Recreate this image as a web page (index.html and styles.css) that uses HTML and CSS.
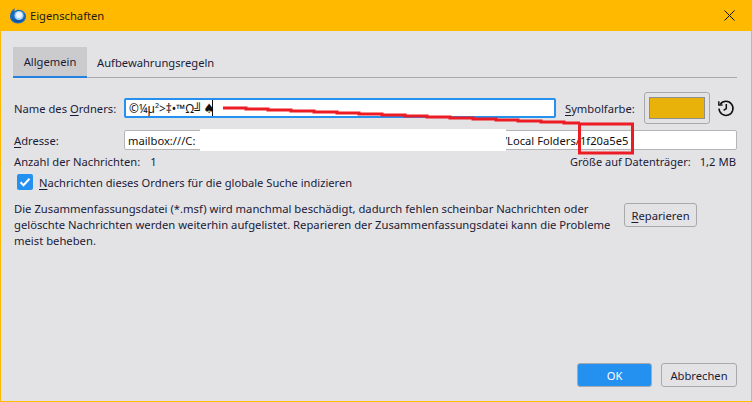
FILE: index.html
```html
<!DOCTYPE html>
<html lang="de">
<head>
<meta charset="utf-8">
<title>Eigenschaften</title>
<link rel="stylesheet" href="styles.css">
</head>
<body>
<div class="window">
  <header class="titlebar">
    <svg class="app-icon" width="18" height="18" viewBox="0 0 18 18">
      <path d="M1 9.500C1 5.500 3 2.500 6 1.200 5.400 2.400 5.300 3.500 5.500 4.300 6.500 3.400 8 2.800 9.500 2.800 13.500 2.800 17 5.800 17 9.500 17 13.500 13.500 16.500 9 16.500 4.500 16.500 1 13.500 1 9.500z" fill="#1a6ac2"/>
      <path d="M3 11C4 14 7 15.500 10 15 13 14.500 15.500 12.500 16 9.500 15.500 12 13 13.500 10 13.500 7 13.500 4.500 12.500 3 11z" fill="#0d4a96"/>
      <circle cx="10" cy="8.500" r="4.600" fill="#a9d2f1"/>
      <circle cx="10" cy="7.900" r="3" fill="#e9f4fc"/>
    </svg>
    <span class="title">Eigenschaften</span>
    <svg class="close" width="11" height="11" viewBox="0 0 11 11"><path d="M.5.500l10 10M10.500.500l-10 10" stroke="#111" stroke-width="1" fill="none"/></svg>
  </header>
  <main class="content">
    <nav class="tabs">
      <div class="tab active">Allgemein</div>
      <div class="tab">Aufbewahrungsregeln</div>
    </nav>
    <div class="row row-name">
      <label class="label"><span>Name des <u>O</u>rdners:</span></label>
      <div class="input focused"><span class="name-text">©¼µ²&gt;‡•™Ω╝ <span class="spade">♠</span></span><i class="caret"></i></div>
      <label class="color-label"><u>S</u>ymbolfarbe:</label>
      <div class="swatch"><div class="swatch-fill"></div></div>
      <svg class="history" width="18" height="18" viewBox="0 0 18 18" fill="none" stroke="#111" stroke-width="1.500">
        <path d="M3.300 5.300A7 7 0 1 1 2 9.500"/>
        <path d="M1.800 2.300v3.700h3.700" stroke-width="1.400"/>
        <path d="M9.300 5v4.500l-2.700 1.800"/>
      </svg>
    </div>
    <div class="row row-address">
      <label class="label"><u>A</u>dresse:</label>
      <div class="input address"><span>mailbox:///C:</span><span class="tail">/Local Folders/1f20a5e5</span></div>
    </div>
    <div class="row row-stats">
      <div class="stat-count">Anzahl der Nachrichten:<span class="count">1</span></div>
      <div class="stat-size">Größe auf Datenträger:<span class="size">1,2 MB</span></div>
    </div>
    <div class="check-row">
      <svg class="checkbox" width="16" height="16" viewBox="0 0 16 16">
        <rect width="16" height="16" rx="2" fill="#2490ef"/>
        <path d="M3.500 8.200l3 3 6-6.500" stroke="#fff" stroke-width="2" fill="none"/>
      </svg>
      <span><u>N</u>achrichten dieses Ordners für die globale Suche indizieren</span>
    </div>
    <div class="repair">
      <p>Die Zusammenfassungsdatei (*.msf) wird manchmal beschädigt, dadurch fehlen scheinbar Nachrichten oder gelöschte Nachrichten werden weiterhin aufgelistet. Reparieren der Zusammenfassungsdatei kann die Probleme meist beheben.</p>
      <div class="button"><span><u>R</u>eparieren</span></div>
    </div>
    <footer class="actions">
      <div class="button primary">OK</div>
      <div class="button">Abbrechen</div>
    </footer>
  </main>
  <div class="redaction"></div>
  <svg class="annotation" width="752" height="402" viewBox="0 0 752 402" fill="none" stroke="#ed1c24" stroke-width="3">
    <path d="M223 108H246V109H268V110H291V111H314V112H337V113H359V114H382V115H405V116H427V117H450V118H473V119H496V120H518V121H541V122H564V123H580"/>
    <rect x="579.500" y="124" width="53" height="29"/>
  </svg>
</div>
</body>
</html>
```
FILE: styles.css
```css
* { box-sizing: border-box; }
html, body { margin: 0; padding: 0; }
body {
  width: 752px;
  height: 402px;
  overflow: hidden;
  font-family: "Noto Sans", "Open Sans", sans-serif;
  font-size: 11.200px;
  color: #1c1b36;
}
u { text-underline-offset: 2px; }
.window {
  position: relative;
  width: 752px;
  height: 402px;
  display: flex;
  flex-direction: column;
  background: #e3e3e6;
  border: 1px solid #ffba00;
  border-top: 0;
}
.titlebar {
  height: 31px;
  margin: 0 -1px;
  flex: none;
  background: #ffba00;
  display: flex;
  align-items: center;
  padding: 0 17px 0 9px;
  color: #1a1a1a;
}
.title { margin-left: 3px; }
.close { margin-left: auto; }
.content {
  flex: 1;
  display: flex;
  flex-direction: column;
  padding: 16px 14px 14px 12px;
}
.tabs {
  display: flex;
  height: 31px;
  border-bottom: 1px solid #a9a9ac;
  flex: none;
}
.tab {
  height: 31px;
  padding: 0 10px;
  display: flex;
  align-items: center;
}
.tab.active {
  width: 74px;
  background: #cbcbcd;
  border-bottom: 2px solid #2382e0;
  justify-content: center;
  padding: 0;
}
.row { display: flex; align-items: center; }
.row-name { margin-top: 14px; height: 32px; }
.label { width: 111px; flex: none; padding-left: 1px; }
.input {
  height: 20px;
  background: #fff;
  border: 1px solid #b5b5b8;
  border-radius: 2px;
  display: flex;
  align-items: center;
  padding-left: 3px;
  color: #111;
  white-space: nowrap;
}
.focused {
  width: 432px;
  border: 2px solid #2490ef;
  padding-left: 3px;
  color: #111;
}
.name-text { font-size: 11.800px; word-spacing: -2px; }
.spade {
  font-family: "DejaVu Sans", sans-serif;
  font-size: 13px;
  line-height: 1;
  margin-right: -3px;
}
.caret { width: 1px; height: 16px; background: #111; }
.color-label { margin-left: 9px; width: 79px; flex: none; }
.swatch {
  width: 66px;
  height: 32px;
  border: 1px solid #a9a9ac;
  border-radius: 3px;
  padding: 4px;
  flex: none;
}
.swatch-fill {
  height: 100%;
  background: #e9b20b;
  border: 1px solid #8f8f92;
}
.history { margin-left: 7px; flex: none; }
.row-address { margin-top: 6px; height: 20px; }
.address { flex: 1; position: relative; }
.tail { margin-left: 307.500px; }
.row-stats {
  justify-content: space-between;
  height: 16px;
  margin-top: 3px;
  padding: 0 1px;
}
.stat-size { font-size: 11px; }
.count { margin-left: 10px; }
.size { margin-left: 9px; font-size: 11.250px; }
.check-row {
  display: flex;
  align-items: center;
  gap: 6px;
  margin-top: 5px;
  padding-left: 4px;
  height: 16px;
  font-size: 11.150px;
}
.repair {
  display: flex;
  justify-content: space-between;
  margin-top: 9px;
  padding: 0 40px 0 1px;
  font-size: 11.250px;
}
.repair p {
  margin: 2px 0 0;
  width: 600px;
  line-height: 16px;
}
.button {
  height: 24px;
  min-width: 73px;
  border: 1px solid #a9a9ac;
  border-radius: 3px;
  display: flex;
  align-items: center;
  justify-content: center;
}
.repair .button { flex: none; margin-top: 4px; }
.actions {
  margin-top: auto;
  display: flex;
  justify-content: flex-end;
  gap: 9px;
}
.actions .button { width: 76px; }
.actions .primary { width: 75px; }
.primary {
  background: #2490ef;
  color: #fff;
}
.redaction {
  position: absolute;
  left: 199px;
  top: 129px;
  width: 306px;
  height: 22px;
  background: #fff;
}
.annotation {
  position: absolute;
  left: -1px;
  top: 0;
  pointer-events: none;
}
```
